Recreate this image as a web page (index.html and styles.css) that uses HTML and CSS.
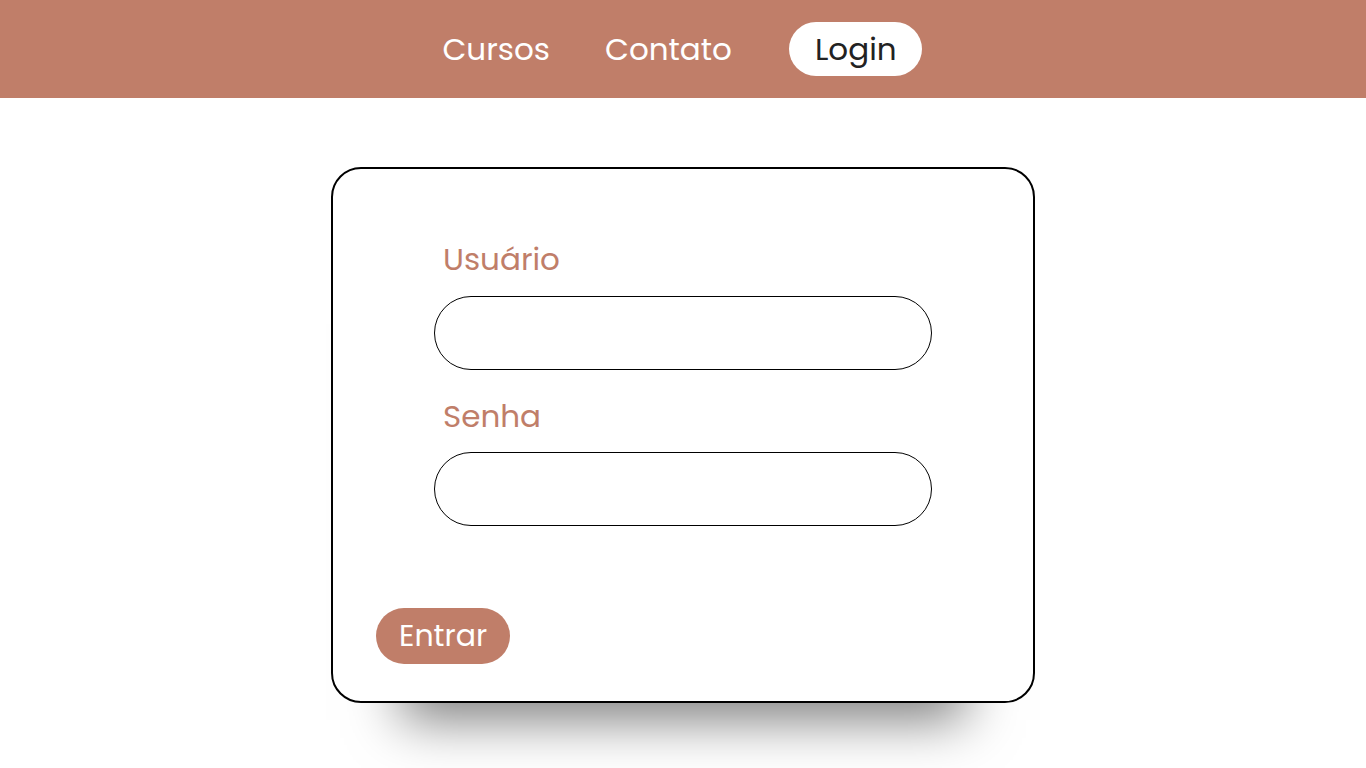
FILE: index.html
```html
<!DOCTYPE html>
<html lang="pt-BR">
<head>
<meta charset="utf-8">
<title>Login</title>
<link rel="stylesheet" href="styles.css">
</head>
<body>
<header class="topbar">
  <nav class="nav">
    <a class="nav-link" href="#">Cursos</a>
    <a class="nav-link" href="#">Contato</a>
    <a class="nav-link nav-pill" href="#">Login</a>
  </nav>
</header>
<main class="main">
  <form class="card">
    <div class="fields">
      <label class="label" for="u">Usuário</label>
      <input class="input" id="u" type="text">
      <label class="label label-2" for="s">Senha</label>
      <input class="input" id="s" type="password">
    </div>
    <button class="btn" type="button">Entrar</button>
  </form>
</main>
</body>
</html>
```
FILE: styles.css
```css
* { box-sizing: border-box; }
html, body { margin: 0; padding: 0; background: #fff; }
body {
  font-family: "Poppins", "Inter", "Liberation Sans", sans-serif;
  height: 768px;
  overflow: hidden;
}
.topbar {
  background: #c07e69;
  height: 98px;
  display: flex;
  align-items: center;
  justify-content: center;
}
.nav {
  display: flex;
  align-items: center;
  gap: 55px;
  padding-right: 2px;
}
.nav-link {
  color: #fff;
  text-decoration: none;
  font-size: 31px;
  line-height: 54px;
}
.nav-pill {
  background: #fff;
  color: #222;
  border-radius: 27px;
  padding: 0 25px 0 26px;
  height: 54px;
  margin-left: 2px;
}
.main {
  padding-top: 69px;
}
.card {
  width: 704px;
  height: 536px;
  margin: 0 auto;
  border: 2px solid #000;
  border-radius: 30px;
  background: #fff;
  box-shadow: 0 87px 50px -70px rgba(0,0,0,0.5);
  display: flex;
  flex-direction: column;
  padding: 67px 0 0 0;
}
.fields {
  display: flex;
  flex-direction: column;
  padding: 0 101px;
}
.label {
  color: #c07e69;
  font-size: 31px;
  line-height: 46px;
  padding-left: 9px;
  margin-bottom: 14px;
}
.label-2 { margin-top: 23px; margin-bottom: 13px; }
.input {
  width: 498px;
  height: 74px;
  border: 1px solid #000;
  border-radius: 37px;
  background: #fff;
  font: inherit;
  outline: none;
}
.btn {
  align-self: flex-start;
  margin: 82px 0 0 43px;
  height: 56px;
  padding: 0 23px;
  border: none;
  border-radius: 28px;
  background: #c07e69;
  color: #fff;
  font-family: inherit;
  font-size: 30px;
}
```
